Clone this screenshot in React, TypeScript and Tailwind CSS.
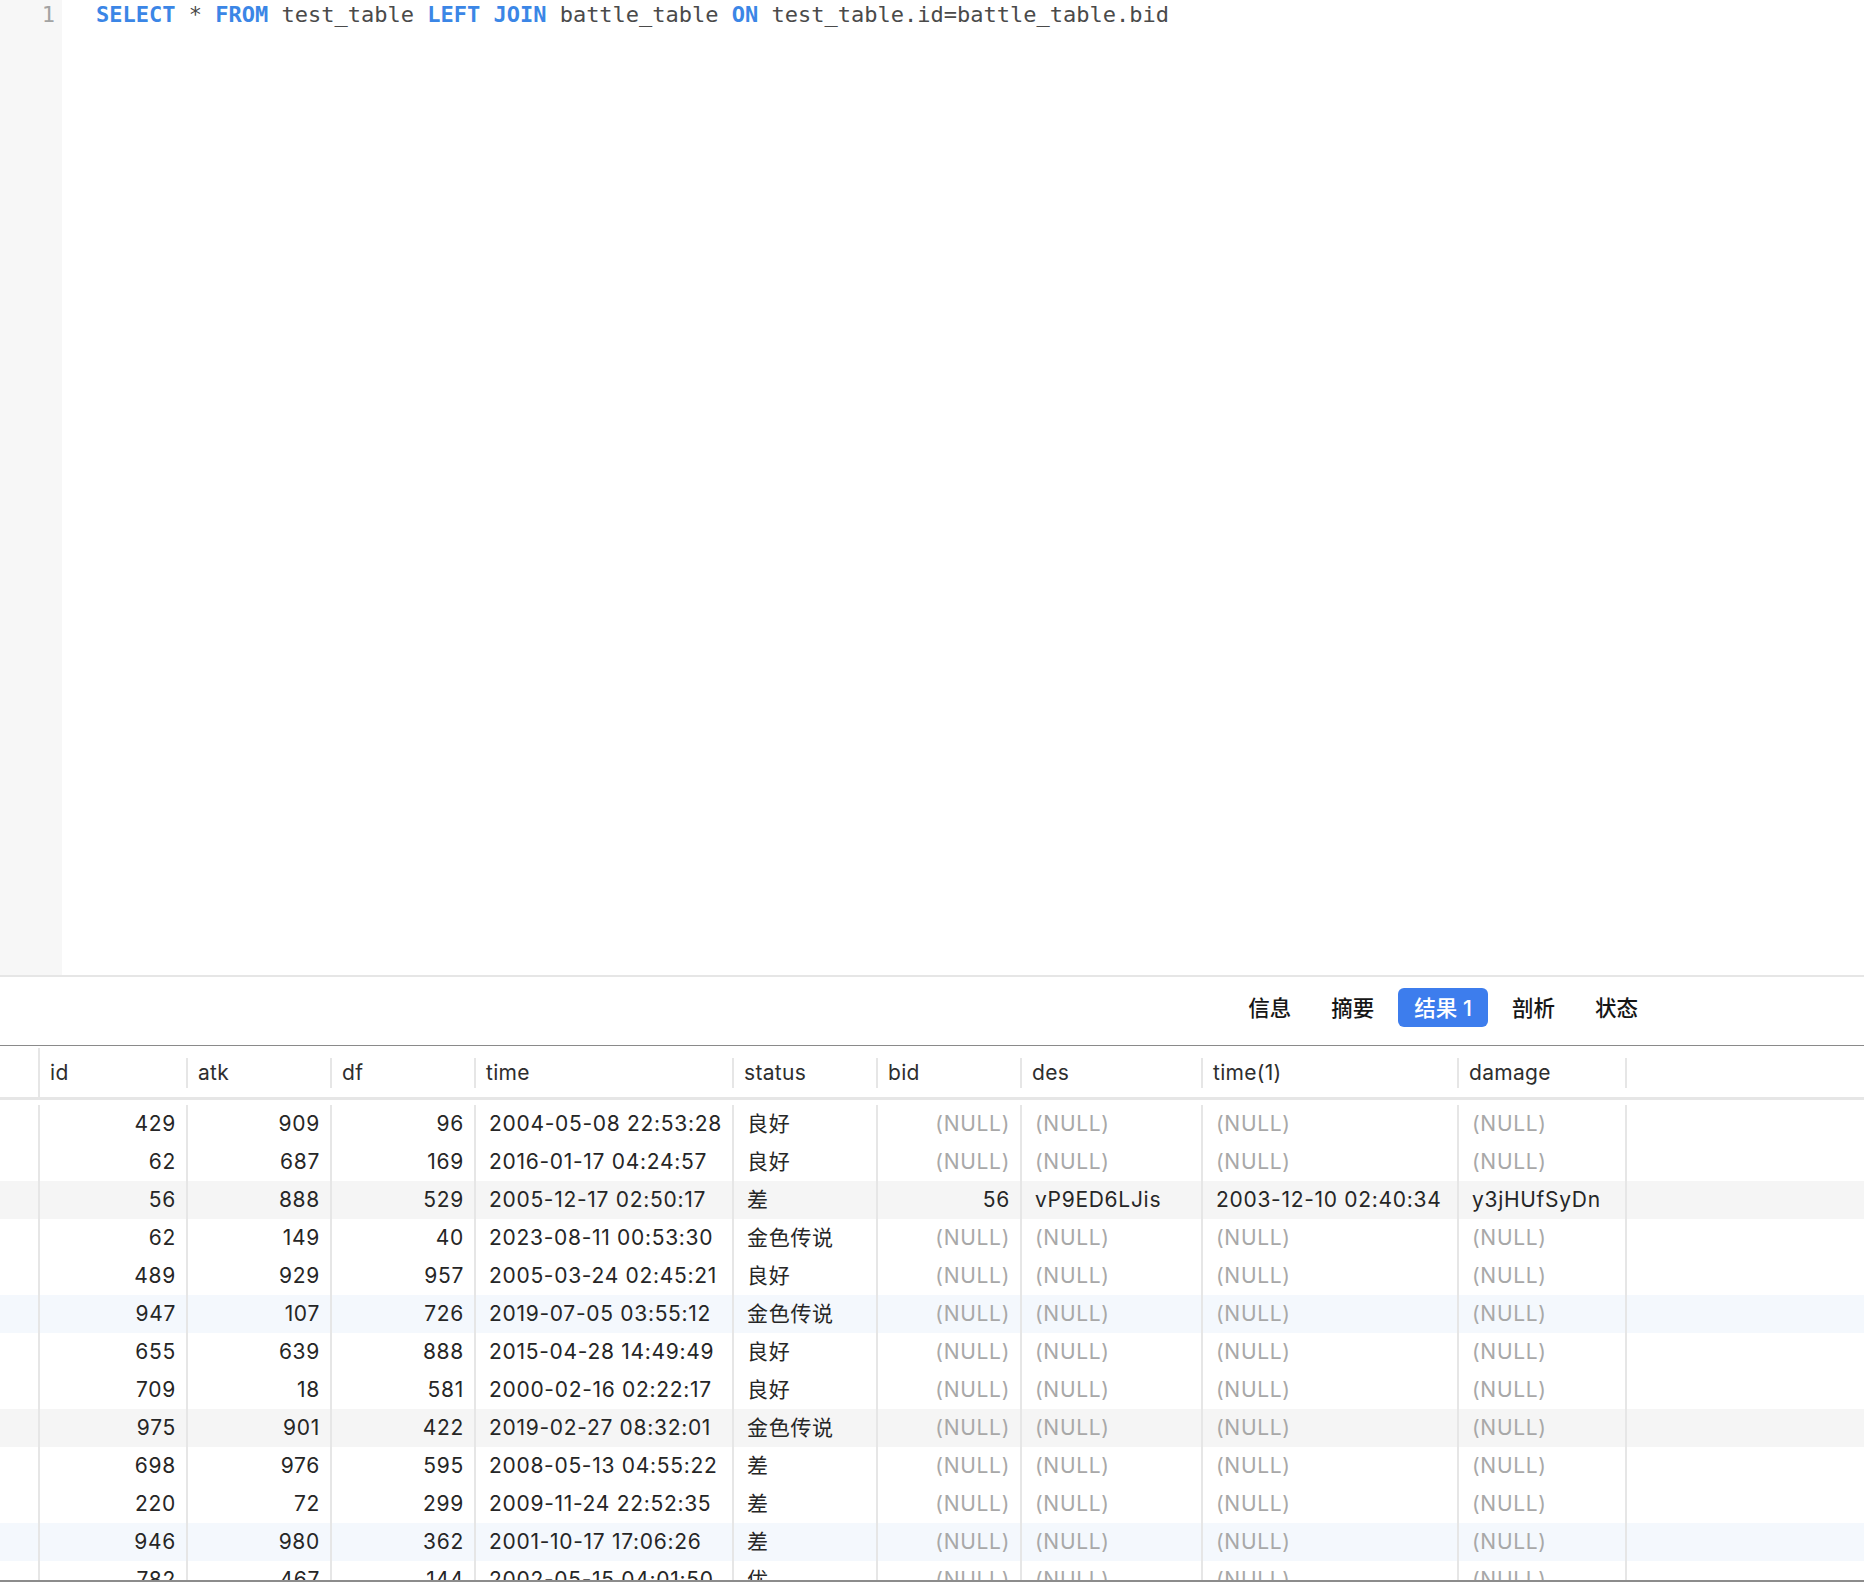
const cols = [
  { name: 'id', w: 'w-[148px]', num: true },
  { name: 'atk', w: 'w-[144px]', num: true },
  { name: 'df', w: 'w-[144px]', num: true },
  { name: 'time', w: 'w-[258px]', num: false },
  { name: 'status', w: 'w-[144px]', num: false },
  { name: 'bid', w: 'w-[144px]', num: true },
  { name: 'des', w: 'w-[181px]', num: false },
  { name: 'time(1)', w: 'w-[256px]', num: false },
  { name: 'damage', w: 'w-[168px]', num: false },
];

type Cell = string | null;

const rows: { bg: string; cells: Cell[] }[] = [
  { bg: '', cells: ['429', '909', '96', '2004-05-08 22:53:28', '良好', null, null, null, null] },
  { bg: '', cells: ['62', '687', '169', '2016-01-17 04:24:57', '良好', null, null, null, null] },
  { bg: 'bg-[#f5f5f5]', cells: ['56', '888', '529', '2005-12-17 02:50:17', '差', '56', 'vP9ED6LJis', '2003-12-10 02:40:34', 'y3jHUfSyDn'] },
  { bg: '', cells: ['62', '149', '40', '2023-08-11 00:53:30', '金色传说', null, null, null, null] },
  { bg: '', cells: ['489', '929', '957', '2005-03-24 02:45:21', '良好', null, null, null, null] },
  { bg: 'bg-[#f4f8fd]', cells: ['947', '107', '726', '2019-07-05 03:55:12', '金色传说', null, null, null, null] },
  { bg: '', cells: ['655', '639', '888', '2015-04-28 14:49:49', '良好', null, null, null, null] },
  { bg: '', cells: ['709', '18', '581', '2000-02-16 02:22:17', '良好', null, null, null, null] },
  { bg: 'bg-[#f5f5f5]', cells: ['975', '901', '422', '2019-02-27 08:32:01', '金色传说', null, null, null, null] },
  { bg: '', cells: ['698', '976', '595', '2008-05-13 04:55:22', '差', null, null, null, null] },
  { bg: '', cells: ['220', '72', '299', '2009-11-24 22:52:35', '差', null, null, null, null] },
  { bg: 'bg-[#f4f8fd]', cells: ['946', '980', '362', '2001-10-17 17:06:26', '差', null, null, null, null] },
  { bg: '', cells: ['782', '467', '144', '2002-05-15 04:01:50', '优', null, null, null, null] },
];

const tabs = ['信息', '摘要', '结果 1', '剖析', '状态'];

function SqlLine() {
  const kw = 'font-bold text-[#3b86e6]';
  return (
    <div className="whitespace-pre font-['DejaVu_Sans_Mono',monospace] text-[22px] leading-[30px] text-[#4a4a4a]">
      <span className={kw}>SELECT</span> * <span className={kw}>FROM</span> test_table{' '}
      <span className={kw}>LEFT</span> <span className={kw}>JOIN</span> battle_table{' '}
      <span className={kw}>ON</span> test_table.id=battle_table.bid
    </div>
  );
}

export default function App() {
  return (
    <div className="flex h-[1596px] w-[1864px] flex-col overflow-hidden bg-white font-[Inter,'Noto_Sans_CJK_SC',sans-serif]">
      {/* editor */}
      <div className="flex h-[975px] flex-none">
        <div className="w-[62px] flex-none bg-[#f7f7f7] pr-[7px] text-right font-['DejaVu_Sans_Mono',monospace] text-[22px] leading-[30px] text-[#a3a3a3]">
          1
        </div>
        <div className="flex-1 pl-[34px]">
          <SqlLine />
        </div>
      </div>
      <div className="h-[2px] flex-none bg-[#e6e6e6]" />

      {/* result tabs */}
      <div className="flex h-[68px] flex-none items-start justify-end gap-2 pr-[210px] pt-[11px]">
        {tabs.map((t) => (
          <button
            key={t}
            className={
              t === '结果 1'
                ? 'h-[39px] rounded-[6px] bg-[#3d7ded] px-4 pt-[2px] text-[21.5px] font-medium text-white'
                : 'h-[39px] rounded-[6px] px-4 pt-[2px] text-[21.5px] font-medium text-[#161616]'
            }
          >
            {t}
          </button>
        ))}
      </div>

      {/* grid header */}
      <div className="h-px flex-none bg-[#8a8a8a]" />
      <div className="flex h-[54px] flex-none border-b-[3px] border-[#e6e6e6] pt-[2px] text-[21px] tracking-[0.3px] text-[#2e2e2e]">
        <div className="w-[40px] flex-none border-r-2 border-[#e6e6e6]" />
        {cols.map((c) => (
          <div key={c.name} className={`${c.w} flex flex-none items-center justify-between pl-[10px]`}>
            <span>{c.name}</span>
            <span className="h-[30px] w-[2px] bg-[#e6e6e6]" />
          </div>
        ))}
      </div>

      {/* grid body */}
      <div className="h-[480px] flex-none overflow-hidden pt-[5px] text-[21px] tracking-[0.7px] text-[#262626]">
        {rows.map((r, i) => (
          <div key={i} className={`flex h-[38px] leading-[38px] ${r.bg}`}>
            <div className="w-[40px] flex-none border-r-2 border-[#e6e6e6]" />
            {cols.map((c, j) => {
              const v = r.cells[j];
              return (
                <div
                  key={c.name}
                  className={`${c.w} flex-none overflow-hidden whitespace-nowrap border-r-2 border-[#e6e6e6] ${
                    c.num ? 'pr-[10px] text-right' : 'pl-[13px]'
                  } ${v === null ? 'text-[#a8a8a8]' : ''}`}
                >
                  {v === null ? '(NULL)' : v}
                </div>
              );
            })}
          </div>
        ))}
      </div>
      <div className="h-[2px] flex-none bg-[#8c8c8c]" />
      <div className="flex-1 bg-white" />
    </div>
  );
}
